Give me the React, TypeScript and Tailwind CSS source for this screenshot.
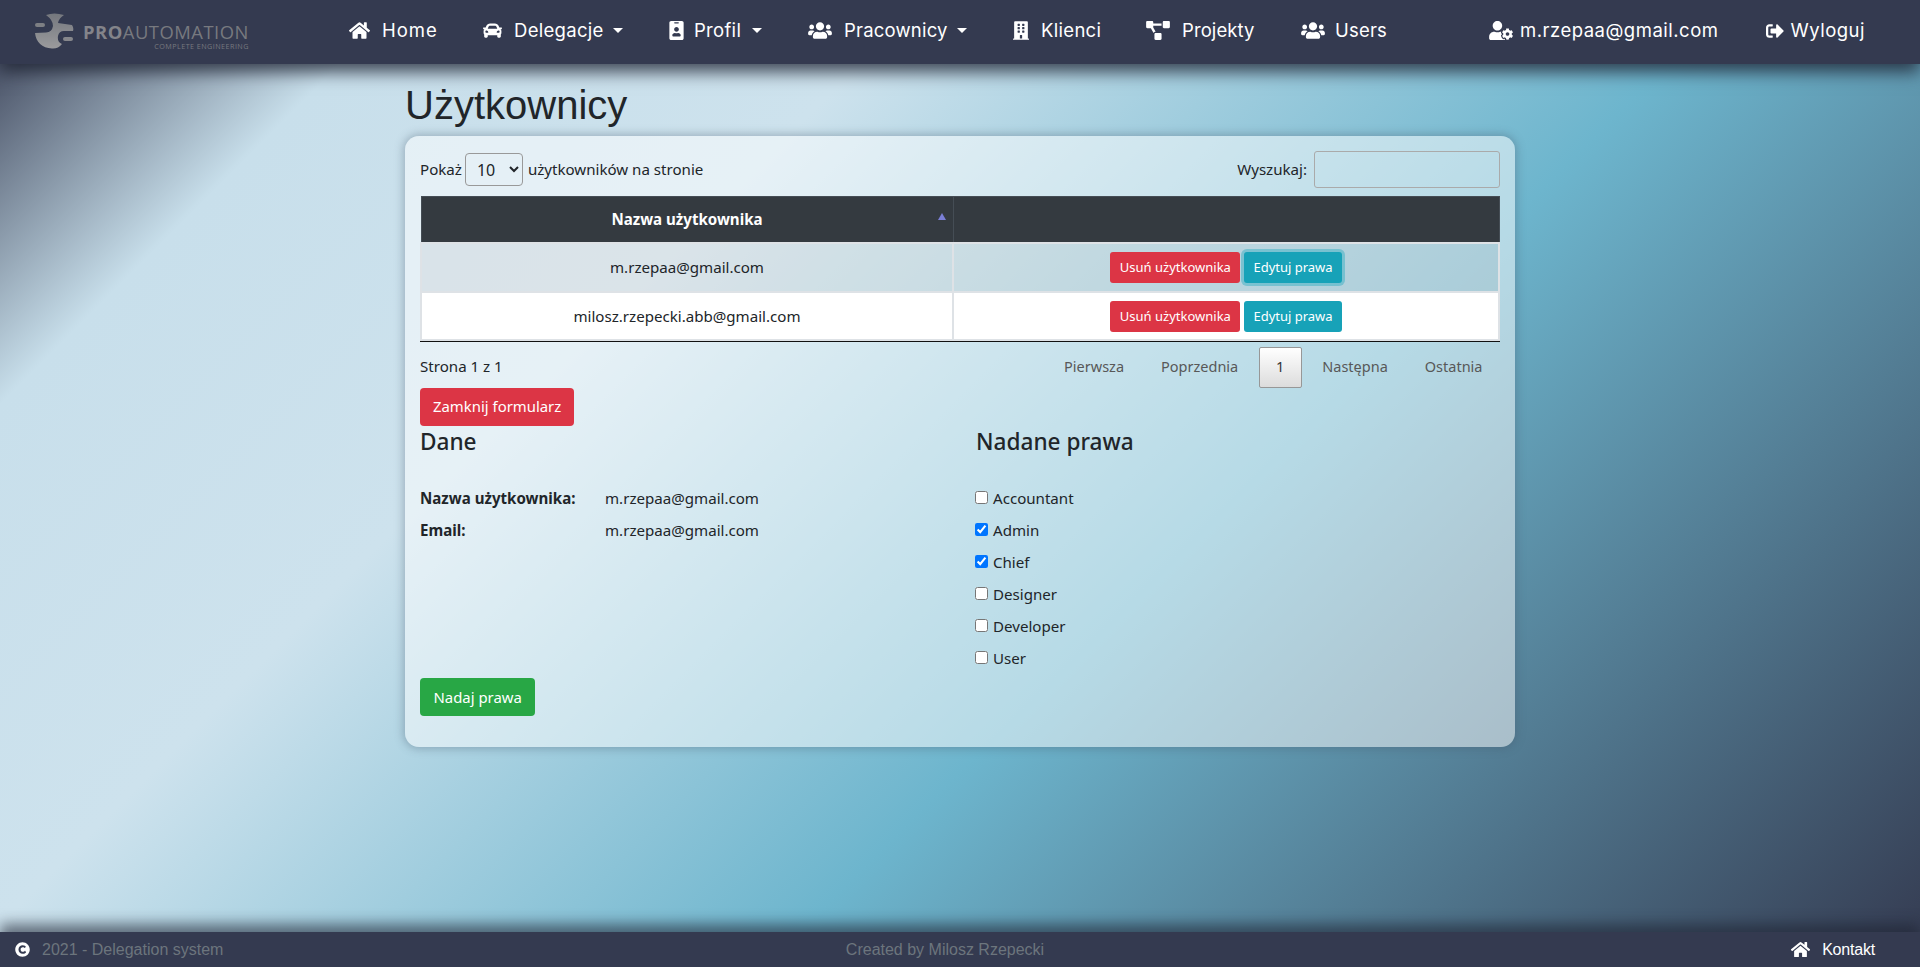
import { FaHome, FaCar, FaIdBadge, FaUsers, FaBuilding, FaProjectDiagram, FaUserCog, FaSignOutAlt, FaCopyright } from "react-icons/fa";
import type { IconType } from "react-icons";

const NAV_LINKS: { label: string; icon: IconType; iconClass: string; textClass: string; caret?: boolean }[] = [
  { label: "Home", icon: FaHome, iconClass: "w-[21px] h-[19px] mr-[12px]", textClass: "w-[55px] tracking-[1px]" },
  { label: "Delegacje", icon: FaCar, iconClass: "w-[19px] h-[19px] mr-[12px]", textClass: "w-[89px] tracking-[0.3px]", caret: true },
  { label: "Profil", icon: FaIdBadge, iconClass: "w-[15px] h-[19px] mr-[10px]", textClass: "w-[48px] tracking-[0.3px]", caret: true },
  { label: "Pracownicy", icon: FaUsers, iconClass: "w-[24px] h-[19px] mr-[12px]", textClass: "w-[103px] tracking-[0.2px]", caret: true },
  { label: "Klienci", icon: FaBuilding, iconClass: "w-[16px] h-[19px] mr-[12px]", textClass: "w-[59px] tracking-[0.3px]" },
  { label: "Projekty", icon: FaProjectDiagram, iconClass: "w-[24px] h-[19px] mr-[12px]", textClass: "w-[73px] tracking-[0.1px]" },
  { label: "Users", icon: FaUsers, iconClass: "w-[24px] h-[19px] mr-[10px]", textClass: "w-[51px] tracking-[0.2px]" },
];

const ROLES = [
  { name: "Accountant", checked: false },
  { name: "Admin", checked: true },
  { name: "Chief", checked: true },
  { name: "Designer", checked: false },
  { name: "Developer", checked: false },
  { name: "User", checked: false },
];

const PAGER = ["Pierwsza", "Poprzednia", "1", "Następna", "Ostatnia"];

function Logo() {
  return (
    <div className="flex items-center gap-[9px]">
      <svg width="46" height="46" viewBox="0 0 46 46" className="opacity-90">
        <defs>
          <linearGradient id="logoGrad" x1="0" y1="0" x2="0" y2="1">
            <stop offset="0" stopColor="#7c7e83" />
            <stop offset="1" stopColor="#a6a6a6" />
          </linearGradient>
        </defs>
        <path
          d="M18 6 Q26 3 36 6 Q31 9 30 14 L44 16 Q46 19 45 22 L36 22 Q31 22 30 27 Q29 33 34 35 Q30 40 24 39.5 C14 39 8 33 7 24 L18 23.5 Q24 23 25 17 Q25 11 18 6 Z"
          fill="url(#logoGrad)"
        />
        <rect x="7" y="14" width="10" height="4" rx="2" fill="#85878a" />
        <rect x="35" y="28" width="10" height="4" rx="2" fill="#8f9093" />
      </svg>
      <div className="flex flex-col items-end pt-[9px] font-['Open_Sans',sans-serif] text-[#77797f] leading-none">
        <div className="text-[18.4px]">
          <span className="font-bold text-[#83848a]">PRO</span>AUTOMATION
        </div>
        <div className="text-[7.2px] tracking-[0.45px] mt-[2px]">COMPLETE ENGINEERING</div>
      </div>
    </div>
  );
}

function Navbar() {
  return (
    <nav className="h-16 shrink-0 bg-[#343a50] flex items-center relative z-10 shadow-[0_8px_16px_rgba(30,35,50,0.8)] font-['Inter',sans-serif] text-[18.5px] tracking-[0.5px] text-white">
      <div className="w-[349px] pl-[28px] shrink-0">
        <Logo />
      </div>
      <div className="flex items-center gap-[46px] pb-[3px]">
        {NAV_LINKS.map((link) => (
          <a key={link.label} className="flex items-center">
            <link.icon className={link.iconClass} />
            <span className={link.textClass}>{link.label}</span>
            {link.caret && (
              <span className="ml-[10px] border-x-[5px] border-x-transparent border-t-[5px] border-t-white" />
            )}
          </a>
        ))}
      </div>
      <div className="flex items-center ml-auto pr-[55px] pb-[3px]">
        <FaUserCog className="w-[24px] h-[19px] mr-[7px]" />
        <span>m.rzepaa@gmail.com</span>
        <FaSignOutAlt className="ml-[48px] w-[18px] h-[18px] mr-[6px]" />
        <span>Wyloguj</span>
      </div>
    </nav>
  );
}

function UsersTable() {
  return (
    <table className="w-full border-collapse text-[#212529] mt-[8px]">
      <thead>
        <tr className="bg-[#343a40] text-white h-[46px]">
          <th className="w-[532px] relative font-bold pt-[1px] border border-[#454d55]">
            Nazwa użytkownika
            <span className="absolute right-[7px] top-[16px] border-x-[4px] border-x-transparent border-b-[7px] border-b-[#7b7fd6]" />
          </th>
          <th className="border border-[#454d55]" />
        </tr>
      </thead>
      <tbody>
        {["m.rzepaa@gmail.com", "milosz.rzepecki.abb@gmail.com"].map((user, i) => (
          <tr key={user} className={i === 0 ? "bg-black/5 h-[49px]" : "bg-white h-[48px]"}>
            <td className={i === 0 ? "text-center border-2 border-[#dee2e6]" : "text-center pt-[2px] border-2 border-[#dee2e6]"}>{user}</td>
            <td className={i === 0 ? "text-center border-2 border-[#dee2e6]" : "text-center pt-[1px] border-2 border-[#dee2e6]"}>
              <div className="flex justify-center gap-[4px]">
                <button className="h-[31px] px-[9.5px] pt-[2px] rounded-[3px] bg-[#dc3545] text-white text-[13px]">
                  Usuń użytkownika
                </button>
                <button
                  className={
                    i === 0
                      ? "h-[31px] px-[9px] pt-[2px] rounded-[3px] bg-[#17a2b8] text-white text-[13px] shadow-[0_0_0_3px_rgba(58,176,195,0.5)]"
                      : "h-[31px] px-[9px] pt-[2px] rounded-[3px] bg-[#17a2b8] text-white text-[13px]"
                  }
                >
                  Edytuj prawa
                </button>
              </div>
            </td>
          </tr>
        ))}
      </tbody>
    </table>
  );
}

function Card() {
  return (
    <div className="rounded-[14px] px-[15px] pt-[15px] pb-[31px] bg-white/50 shadow-[0_0_8px_2px_rgba(70,90,110,0.35)] text-[15.1px] text-[#212529]">
      <div className="flex items-center justify-between h-[37px]">
        <div className="flex items-center gap-[4px]">
          <span>Pokaż</span>
          <select className="w-[58px] h-[33px] -ml-px mr-px border border-[#999] rounded-[4px] px-[7px] text-[16px] bg-transparent">
            <option>10</option>
          </select>
          <span>użytkowników na stronie</span>
        </div>
        <div className="flex items-center gap-[7px]">
          <span>Wyszukaj:</span>
          <div className="w-[186px] h-[37px] border border-[#aaa] rounded-[3px]" />
        </div>
      </div>
      <UsersTable />
      <div className="border-t border-[#111] flex items-start justify-between h-[47px]">
        <span className="mt-[13px]">Strona 1 z 1</span>
        <div className="flex items-center mt-[5px] -mr-[1px] text-[14.5px] text-[#585858]">
          {PAGER.map((item) =>
            item === "1" ? (
              <span
                key={item}
                className="w-[43px] h-[41px] flex items-center justify-center mx-[2px] border border-[#979797] rounded-[2px] text-[#333] bg-[linear-gradient(to_bottom,#ffffff,#dcdcdc)]"
              >
                1
              </span>
            ) : (
              <span key={item} className="px-[18.5px]">
                {item}
              </span>
            )
          )}
        </div>
      </div>
      <button className="h-[38px] px-[13px] rounded-[4px] bg-[#dc3545] text-white text-[14.9px] leading-none block">
        Zamknij formularz
      </button>
      <div className="flex mt-[2px]">
        <div className="w-[556px]">
          <h4 className="text-[22.6px] font-medium leading-[1.2] mb-[32px]">Dane</h4>
          <div className="flex flex-col gap-[8px]">
            <div className="flex h-[24px] items-center">
              <b className="w-[185px]">Nazwa użytkownika:</b>
              <span>m.rzepaa@gmail.com</span>
            </div>
            <div className="flex h-[24px] items-center">
              <b className="w-[185px]">Email:</b>
              <span>m.rzepaa@gmail.com</span>
            </div>
          </div>
        </div>
        <div>
          <h4 className="text-[22.6px] font-medium leading-[1.2] mb-[32px]">Nadane prawa</h4>
          <div className="flex flex-col gap-[8px]">
            {ROLES.map((role) => (
              <label key={role.name} className="flex items-center h-[24px] gap-[5px] -ml-[1px]">
                <input type="checkbox" defaultChecked={role.checked} className="w-[13px] h-[13px] m-0 -mt-[2px]" />
                <span>{role.name}</span>
              </label>
            ))}
          </div>
        </div>
      </div>
      <button className="h-[38px] px-[13.5px] pt-[1px] rounded-[4px] bg-[#28a745] text-white text-[14.9px] leading-none mt-[7px] block">
        Nadaj prawa
      </button>
    </div>
  );
}

function Footer() {
  return (
    <footer className="h-[35px] shrink-0 bg-[#343a50] flex items-center relative z-10 px-[15px] shadow-[0_-8px_14px_rgba(30,35,50,0.6)] font-['Liberation_Sans',sans-serif] text-[16px] text-[#6c757d]">
      <div className="flex-1 flex items-center">
        <FaCopyright className="w-[15px] h-[15px] text-white mr-[12px]" />
        <span>2021 - Delegation system</span>
      </div>
      <div className="flex-1 text-center">Created by Milosz Rzepecki</div>
      <div className="flex-1 flex items-center justify-end text-white pr-[30px]">
        <FaHome className="w-[21px] h-[17px] mr-[11px]" />
        <span className="tracking-[-0.2px]">Kontakt</span>
      </div>
    </footer>
  );
}

export default function App() {
  return (
    <div className="h-[967px] flex flex-col overflow-hidden font-['Noto_Sans',sans-serif] bg-[linear-gradient(135deg,#343a50_0%,#c8dfeb_14%,#cde2ed_32%,#6db5cd_60%,#343a50_100%)]">
      <Navbar />
      <main className="flex-1">
        <div className="w-[1110px] ml-[405px]">
          <h1 className="text-[40px] leading-[48px] text-[#212529] font-['Liberation_Sans',sans-serif] mt-[17px] mb-[7px]">
            Użytkownicy
          </h1>
          <Card />
        </div>
      </main>
      <Footer />
    </div>
  );
}
